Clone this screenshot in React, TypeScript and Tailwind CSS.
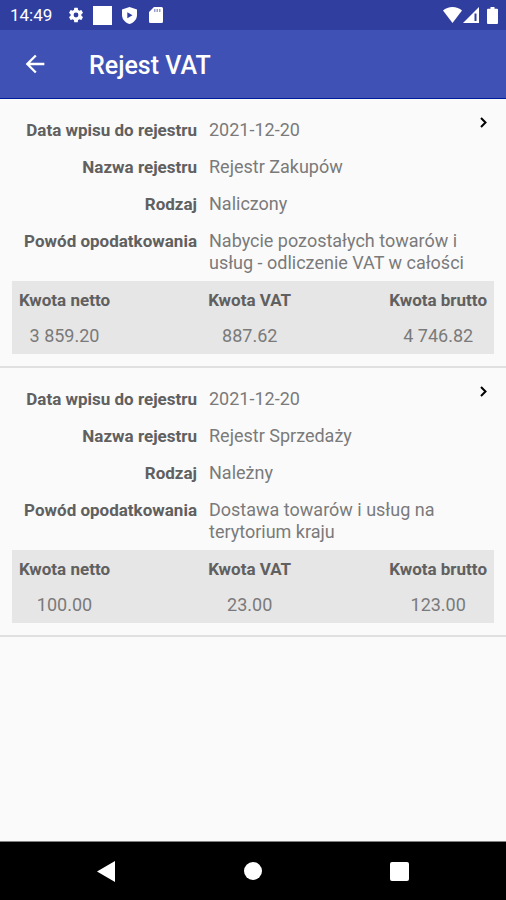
type VatEntry = {
  date: string;
  register: string;
  kind: string;
  reason: string;
  net: string;
  vat: string;
  gross: string;
};

const entries: VatEntry[] = [
  {
    date: "2021-12-20",
    register: "Rejestr Zakupów",
    kind: "Naliczony",
    reason: "Nabycie pozostałych towarów i usług - odliczenie VAT w całości",
    net: "3 859.20",
    vat: "887.62",
    gross: "4 746.82",
  },
  {
    date: "2021-12-20",
    register: "Rejestr Sprzedaży",
    kind: "Należny",
    reason: "Dostawa towarów i usług na terytorium kraju",
    net: "100.00",
    vat: "23.00",
    gross: "123.00",
  },
];

function StatusBar() {
  return (
    <div className="flex h-[30px] items-center justify-between bg-[#303f9f] pl-[10px] pr-2 text-white">
      <div className="flex items-center">
        <span className="w-[57px] text-[17px] leading-[22px]">14:49</span>
        <svg className="mr-2 size-[18px]" viewBox="0 0 24 24" fill="currentColor" aria-hidden="true">
          <path d="M19.14 12.94c.04-.3.06-.61.06-.94 0-.32-.02-.64-.07-.94l2.03-1.58a.49.49 0 0 0 .12-.61l-1.92-3.32a.49.49 0 0 0-.59-.22l-2.39.96c-.5-.38-1.03-.7-1.62-.94l-.36-2.54a.48.48 0 0 0-.48-.41h-3.84a.47.47 0 0 0-.47.41l-.36 2.54c-.59.24-1.13.57-1.62.94l-2.39-.96a.48.48 0 0 0-.59.22L2.74 8.87a.47.47 0 0 0 .12.61l2.03 1.58c-.05.3-.09.63-.09.94s.02.64.07.94l-2.03 1.58a.49.49 0 0 0-.12.61l1.92 3.32c.12.22.37.29.59.22l2.39-.96c.5.38 1.03.7 1.62.94l.36 2.54c.05.24.24.41.48.41h3.84c.24 0 .44-.17.47-.41l.36-2.54c.59-.24 1.13-.56 1.62-.94l2.39.96c.22.08.47 0 .59-.22l1.92-3.32a.47.47 0 0 0-.12-.61zM12 15.2a3.2 3.2 0 1 1 0-6.4 3.2 3.2 0 0 1 0 6.4z" />
        </svg>
        <span className="mr-[10px] size-[19px] bg-white" />
        <svg className="mr-3 h-[17px] w-[15px]" viewBox="0 0 15 17" aria-hidden="true">
          <path d="M7.500 0 15 2.600V8c0 4.300-3.200 7.700-7.500 9C3.200 15.700 0 12.300 0 8V2.600z" fill="#fff" />
          <path d="M5.300 5.300 10.500 8.300 5.300 11.300z" fill="#303f9f" />
        </svg>
        <svg className="h-4 w-[14px]" viewBox="0 0 14 16" aria-hidden="true">
          <path d="M5 0h7.500A1.500 1.500 0 0 1 14 1.500v13a1.500 1.500 0 0 1-1.500 1.500h-11A1.500 1.500 0 0 1 0 14.500V5z" fill="#fff" />
          <path d="M5 2h1.500v3H5zM7.500 2H9v3H7.500zM10 2h1.500v3H10z" fill="#303f9f" opacity=".5" />
        </svg>
      </div>
      <div className="flex items-center">
        <svg className="h-4 w-[19px]" viewBox="0 0 19 16" fill="#fff" aria-hidden="true">
          <path d="M0 3.500C2.500 1.300 5.800 0 9.500 0S16.500 1.300 19 3.500L9.500 16z" />
        </svg>
        <svg className="mx-px mr-2 size-4" viewBox="0 0 16 16" aria-hidden="true">
          <path d="M16 0v16H0z" fill="#fff" />
          <path d="M11.500 6.500H13.500V14h-2z" fill="#303f9f" />
        </svg>
        <svg className="h-[17px] w-[11px]" viewBox="0 0 11 17" fill="#fff" aria-hidden="true">
          <path d="M3.500 0h4v1.700H10a1 1 0 0 1 1 1V16a1 1 0 0 1-1 1H1a1 1 0 0 1-1-1V2.700a1 1 0 0 1 1-1h2.500z" />
        </svg>
      </div>
    </div>
  );
}

function Field({ label, value }: { label: string; value: string }) {
  return (
    <div className="grid grid-cols-[185px_1fr] gap-x-3">
      <dt className="text-right text-[17px] font-bold leading-[22px] text-[#606060]">{label}</dt>
      <dd className="text-[18px] leading-[22px]">{value}</dd>
    </div>
  );
}

function EntryCard({ entry }: { entry: VatEntry }) {
  return (
    <li className="border-b-2 border-[#e0e0e0] px-3 pb-3 text-[#7a7a7a]">
      <div className="flex items-start">
        <dl className="flex grow flex-col gap-[15px] pb-[7px] pt-5">
          <Field label="Data wpisu do rejestru" value={entry.date} />
          <Field label="Nazwa rejestru" value={entry.register} />
          <Field label="Rodzaj" value={entry.kind} />
          <Field label="Powód opodatkowania" value={entry.reason} />
        </dl>
        <button type="button" aria-label="Szczegóły" className="px-[6px] pt-[18px] text-black">
          <svg className="h-[11px] w-[9px]" viewBox="0 0 9 11" fill="none" stroke="currentColor" strokeWidth="2" aria-hidden="true">
            <path d="M2 1 6.500 5.500 2 10" />
          </svg>
        </button>
      </div>
      <table className="w-full bg-[#e6e6e6] text-center">
        <thead className="text-[17px] leading-[22px] text-[#606060]">
          <tr>
            <th className="w-px whitespace-nowrap px-[7px] pb-[7px] pt-2">Kwota netto</th>
            <th className="pb-[7px] pt-2">Kwota VAT</th>
            <th className="w-px whitespace-nowrap px-[7px] pb-[7px] pt-2">Kwota brutto</th>
          </tr>
        </thead>
        <tbody className="text-[18px] leading-[22px]">
          <tr>
            <td className="pb-[7px] pt-[7px]">{entry.net}</td>
            <td className="pb-[7px] pt-[7px]">{entry.vat}</td>
            <td className="pb-[7px] pt-[7px]">{entry.gross}</td>
          </tr>
        </tbody>
      </table>
    </li>
  );
}

export default function App() {
  return (
    <div className="flex min-h-screen flex-col bg-[#fafafa] font-[Roboto,sans-serif]">
      <StatusBar />
      <header className="flex h-[69px] items-center border-b border-[#001a9c] bg-[#3f51b5] pl-[21px] text-white">
        <button type="button" aria-label="Wstecz" className="mr-10">
          <svg className="size-[28px]" viewBox="0 0 24 24" fill="currentColor" aria-hidden="true">
            <path d="M20 11H7.830l5.590-5.590L12 4l-8 8 8 8 1.410-1.410L7.830 13H20z" />
          </svg>
        </button>
        <h1 className="pt-1 text-[25px] font-medium leading-8">Rejest VAT</h1>
      </header>
      <main className="grow">
        <ul>
          {entries.map((entry) => (
            <EntryCard key={entry.register} entry={entry} />
          ))}
        </ul>
      </main>
      <nav className="grid h-[59px] grid-cols-3 place-items-center border-t border-[#808080] bg-black px-[33px] text-white">
        <button type="button" aria-label="Wróć">
          <svg className="h-[21px] w-[18px]" viewBox="0 0 18 21" fill="currentColor" aria-hidden="true">
            <path d="M18 0v21L0 10.500z" />
          </svg>
        </button>
        <button type="button" aria-label="Ekran główny" className="size-[18px] rounded-full bg-white" />
        <button type="button" aria-label="Ostatnie aplikacje" className="size-[19px] rounded-xs bg-white" />
      </nav>
    </div>
  );
}
